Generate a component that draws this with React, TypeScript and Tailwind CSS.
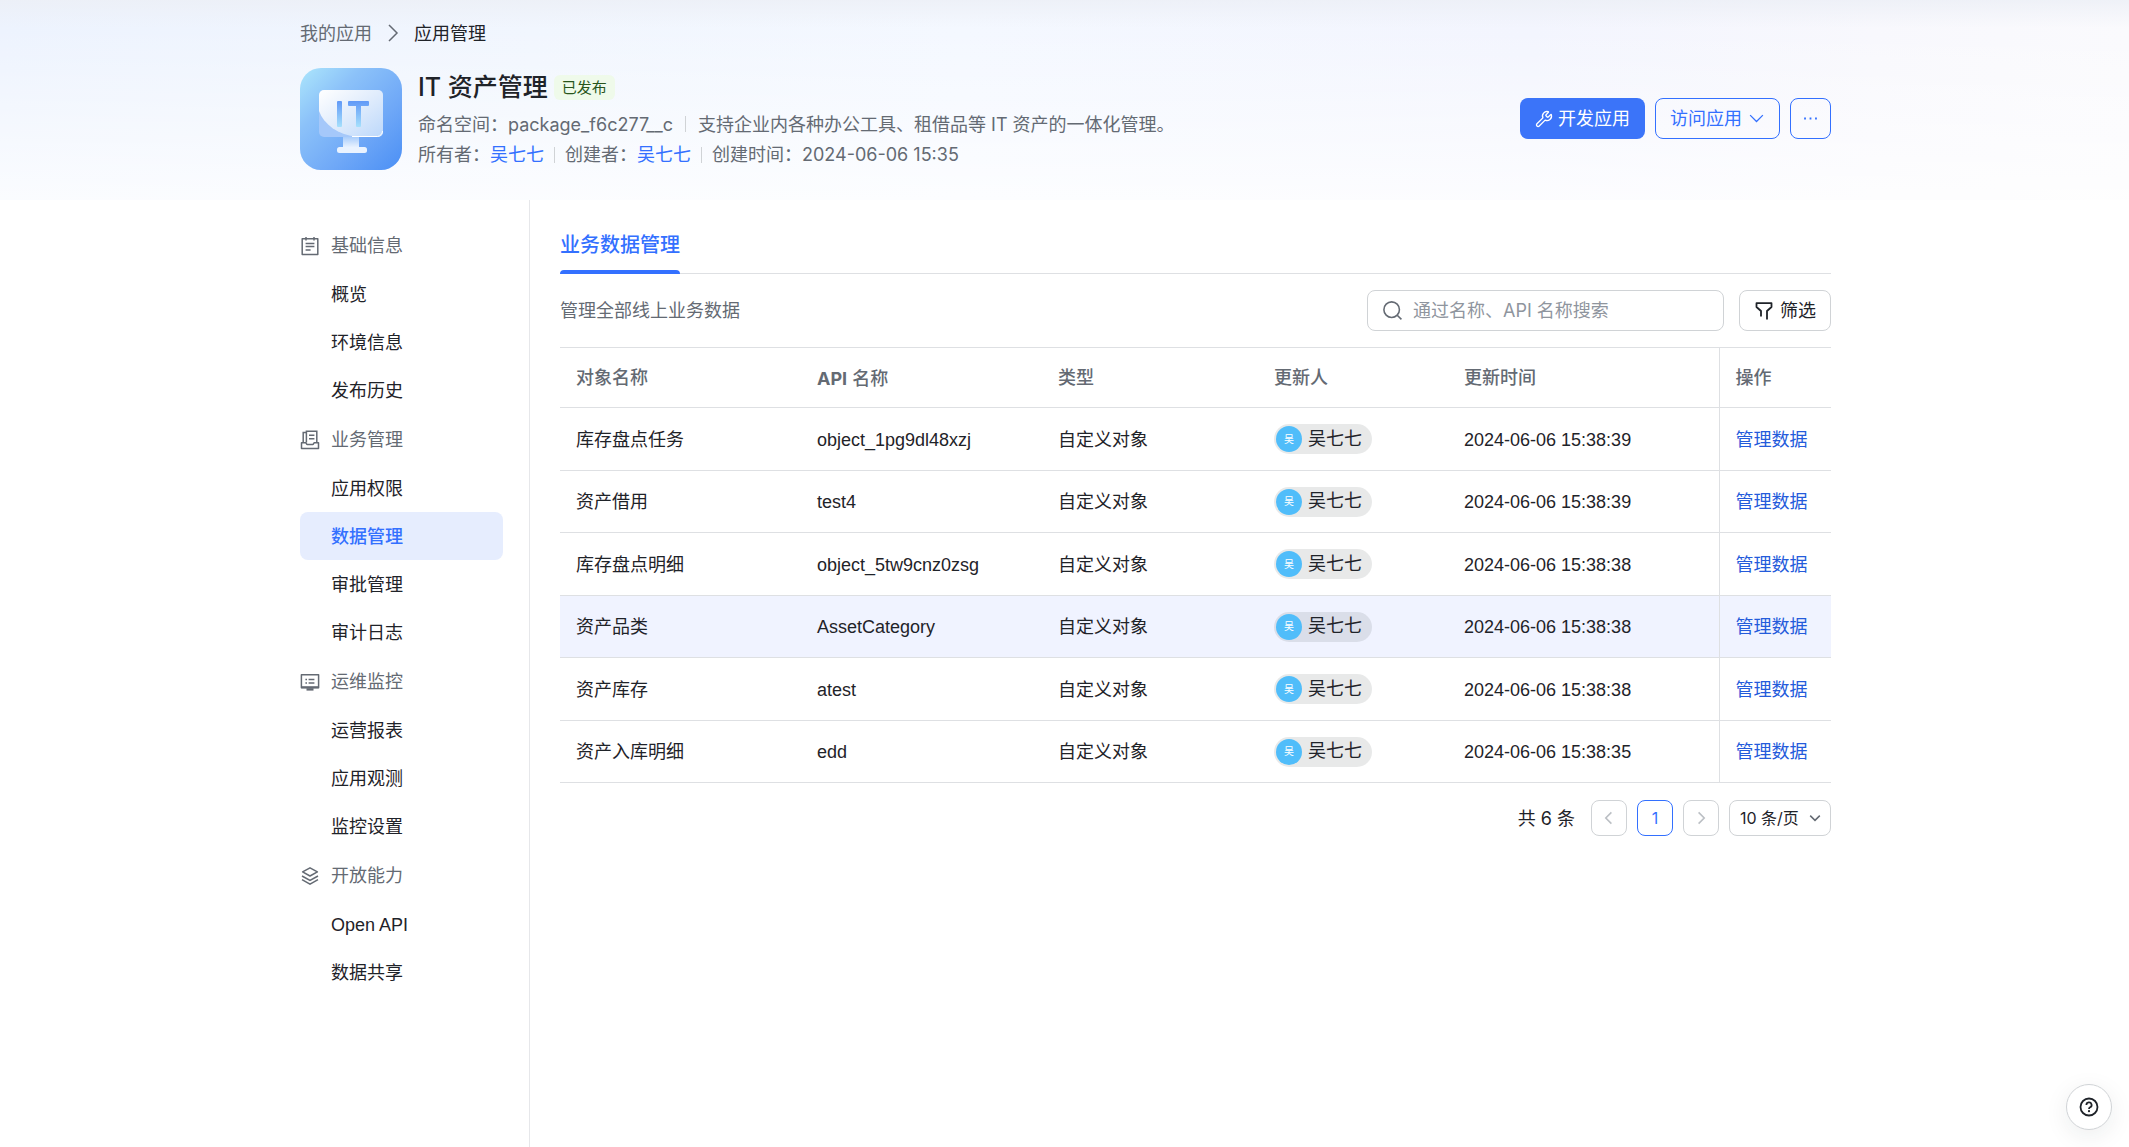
import { ReactNode } from 'react';
import { Wrench } from 'lucide-react';

type AssetObject = {
    name: string;
    api: string;
    time: string;
};

const objects: AssetObject[] = [
    { name: '库存盘点任务', api: 'object_1pg9dl48xzj', time: '2024-06-06 15:38:39' },
    { name: '资产借用', api: 'test4', time: '2024-06-06 15:38:39' },
    { name: '库存盘点明细', api: 'object_5tw9cnz0zsg', time: '2024-06-06 15:38:38' },
    { name: '资产品类', api: 'AssetCategory', time: '2024-06-06 15:38:38' },
    { name: '资产库存', api: 'atest', time: '2024-06-06 15:38:38' },
    { name: '资产入库明细', api: 'edd', time: '2024-06-06 15:38:35' },
];

const Icon = ({ size, children, className }: { size: number; children: ReactNode; className?: string }) => (
    <svg
        width={size}
        height={size}
        viewBox="0 0 20 20"
        fill="none"
        stroke="currentColor"
        strokeWidth="1.5"
        aria-hidden="true"
        className={`shrink-0 ${className ?? ''}`}
    >
        {children}
    </svg>
);

const menu = [
    {
        title: '基础信息',
        icon: (
            <>
                <path d="M2.2 2.8h15.6v15.6H2.2z" strokeLinejoin="round" />
                <path d="M6 1v3.4M14 1v3.4M5.6 7.4h8.8M5.6 10.6h8.8M5.6 13.9h5" />
            </>
        ),
        items: ['概览', '环境信息', '发布历史'],
    },
    {
        title: '业务管理',
        icon: (
            <>
                <path d="M1.5 12.8h4.2c.6 0 .8 1.7 1.6 1.7h5.4c.8 0 1-1.7 1.6-1.7h4.2v5.7h-17z" strokeLinejoin="round" />
                <path d="M3.2 12.5V2.5h3.2M6.4 12.5V1.2h10.4v11.3M9 5.2h5.4M9 8.8h5.4" />
            </>
        ),
        items: ['应用权限', '数据管理', '审批管理', '审计日志'],
    },
    {
        title: '运维监控',
        icon: (
            <>
                <path d="M1.4 2.8h17.2v13H1.4z" strokeLinejoin="round" />
                <path d="M1.4 15.2h17.2" strokeWidth="2" />
                <path d="M6.5 17.4h7" strokeWidth="2.4" />
                <path d="M5.4 7.4H7M8.6 7.4h5.8M5.4 11H7M8.6 11h5.8" />
            </>
        ),
        items: ['运营报表', '应用观测', '监控设置'],
    },
    {
        title: '开放能力',
        icon: (
            <>
                <path d="M10 1.8l7.4 4.1L10 10 2.6 5.9z" strokeLinejoin="round" />
                <path d="M2 10l8 4.3 8-4.3M2 13.7l8 4.4 8-4.4" />
            </>
        ),
        items: ['Open API', '数据共享'],
    },
];

const AppLogo = () => (
    <svg viewBox="0 0 102 102" role="img" aria-label="IT" className="size-[102px] shrink-0">
        <defs>
            <linearGradient id="logo-bg" x1="0" y1="0" x2="1" y2="1">
                <stop offset="0" stopColor="#ace6fc" />
                <stop offset="0.3" stopColor="#8cc2f9" />
                <stop offset="0.65" stopColor="#6fa8f7" />
                <stop offset="1" stopColor="#4b8ff5" />
            </linearGradient>
            <linearGradient id="logo-screen" x1="0" y1="0" x2="1" y2="1">
                <stop offset="0" stopColor="#ffffff" />
                <stop offset="0.5" stopColor="#e0ecfc" />
                <stop offset="1" stopColor="#bcd8fb" />
            </linearGradient>
            <linearGradient id="logo-mark" x1="0" y1="0" x2="0" y2="1">
                <stop offset="0" stopColor="#6199f7" />
                <stop offset="1" stopColor="#a6e0fc" />
            </linearGradient>
            <linearGradient id="logo-stand" x1="0" y1="0" x2="0" y2="1">
                <stop offset="0" stopColor="#a9cdfb" />
                <stop offset="1" stopColor="#eef5ff" />
            </linearGradient>
        </defs>
        <rect width="102" height="102" rx="21" fill="url(#logo-bg)" />
        <rect x="19" y="22" width="64" height="47" rx="5" fill="#a5c8fa" />
        <path d="M24 22h54a5 5 0 0 1 5 5v37a5 5 0 0 1-5 5H56C38 66 24 57 19 43V27a5 5 0 0 1 5-5z" fill="url(#logo-screen)" />
        <path d="M82.500 63a5.500 5.500 0 0 1-5 5.500H52" fill="none" stroke="#fff" />
        <rect x="37" y="33" width="5" height="26" rx="1" fill="url(#logo-mark)" />
        <path d="M49 33h19a1 1 0 0 1 1 1v3a1 1 0 0 1-1 1h-7v20a1 1 0 0 1-1 1h-3a1 1 0 0 1-1-1V38h-7a1 1 0 0 1-1-1v-3a1 1 0 0 1 1-1z" fill="url(#logo-mark)" />
        <rect x="43" y="69" width="16" height="11" fill="url(#logo-stand)" />
        <rect x="37" y="79" width="30" height="6" rx="2.500" fill="#eaf3ff" />
    </svg>
);

const Divider = () => <span className="h-4 w-px bg-[#d0d3d6]" />;

const Header = () => (
    <header className="bg-[linear-gradient(to_bottom,rgba(236,239,246,0.8)_0,rgba(255,255,255,0)_28px,rgba(255,255,255,0.75)_100%),linear-gradient(to_right,#edf3fe_0%,#f1f6fe_25%,#f4f8ff_45%,#f3f5fe_72%,#f8f8fd_88%,#fafafd_100%)]">
        <div className="mx-auto h-[200px] max-w-[1533px] pl-[2px]">
            <nav aria-label="breadcrumb" className="flex h-[66px] items-center gap-[11px] text-[#646a73]">
                <a href="#apps">我的应用</a>
                <Icon size={20}>
                    <path d="M6 2l8 8-8 8" />
                </Icon>
                <a href="#app" className="text-[#1f2329]">应用管理</a>
            </nav>
            <div className="flex items-start justify-between pt-[2px]">
                <div className="flex gap-4">
                    <AppLogo />
                    <div className="flex flex-col text-[#646a73]">
                        <div className="flex h-10 items-center gap-[6px]">
                            <h1 className="text-[25px] font-medium text-[#1f2329]">IT 资产管理</h1>
                            <span className="mb-[2px] rounded-md bg-[#effaea] px-2 text-[15px] leading-[25px] text-[#28551b]">已发布</span>
                        </div>
                        <div className="flex h-8 items-center gap-3">
                            <span>命名空间：package_f6c277__c</span>
                            <Divider />
                            <span>支持企业内各种办公工具、租借品等 IT 资产的一体化管理。</span>
                        </div>
                        <div className="flex h-[29px] items-center gap-[10px]">
                            <span>所有者：<a href="#owner" className="text-[#3370ff]">吴七七</a></span>
                            <Divider />
                            <span>创建者：<a href="#creator" className="text-[#3370ff]">吴七七</a></span>
                            <Divider />
                            <span>创建时间：2024-06-06 15:35</span>
                        </div>
                    </div>
                </div>
                <div className="flex gap-[10px] pt-[30px]">
                    <button className="flex h-[41px] items-center gap-[5px] rounded-lg bg-[#3b74f9] px-[15px] text-white">
                        <Wrench size={18} strokeWidth={1.8} aria-hidden="true" />
                        开发应用
                    </button>
                    <button className="flex h-[41px] items-center gap-[6px] rounded-lg border border-[#3370ff] px-[14px] text-[#3370ff]">
                        访问应用
                        <Icon size={17}>
                            <path d="M2.500 6l7.500 7.500L17.500 6" />
                        </Icon>
                    </button>
                    <button aria-label="更多" className="flex h-[41px] w-[41px] items-center justify-center rounded-lg border border-[#3370ff] text-[#3370ff]">
                        <Icon size={15}>
                            <path d="M1.500 10h2.400M8.800 10h2.400M16.100 10h2.400" strokeWidth="2.400" />
                        </Icon>
                    </button>
                </div>
            </div>
        </div>
    </header>
);

const Sidebar = () => (
    <nav aria-label="应用菜单" className="flex w-[230px] shrink-0 flex-col gap-[2px] border-r border-[#e6e7ea] pt-[22px] pr-[26px] font-['Liberation_Sans','Noto_Sans_CJK_SC',sans-serif]">
        {menu.map((group) => (
            <section key={group.title}>
                <h2 className="flex h-12 items-center gap-[11px] text-[#646a73]">
                    <Icon size={20}>{group.icon}</Icon>
                    {group.title}
                </h2>
                {group.items.map((item) => (
                    <a
                        key={item}
                        href="#menu"
                        className={`flex h-12 items-center rounded-lg pt-[2px] pl-[31px] ${
                            item === '数据管理' ? 'bg-[#e6edfe] font-medium text-[#3370ff]' : 'text-[#1f2329]'
                        }`}
                    >
                        {item}
                    </a>
                ))}
            </section>
        ))}
    </nav>
);

const ObjectTable = () => (
    <table className="w-full table-fixed border-collapse text-left font-['Liberation_Sans','Noto_Sans_CJK_SC',sans-serif] text-[#1f2329]">
        <colgroup>
            <col className="w-[241px]" />
            <col className="w-[241px]" />
            <col className="w-[216px]" />
            <col className="w-[190px]" />
            <col />
            <col className="w-[112px]" />
        </colgroup>
        <thead className="border-y border-[#dee0e3] text-[#646a73]">
            <tr className="h-[60px]">
                <th className="px-4 pt-[2px] font-medium">对象名称</th>
                <th className="px-4 pt-[2px] font-medium">
                    <span className="font-['Inter',sans-serif] font-bold">API</span> 名称
                </th>
                <th className="px-4 pt-[2px] font-medium">类型</th>
                <th className="px-4 pt-[2px] font-medium">更新人</th>
                <th className="px-4 pt-[2px] font-medium">更新时间</th>
                <th className="border-l border-[#dee0e3] px-4 pt-[2px] font-medium">操作</th>
            </tr>
        </thead>
        <tbody>
            {objects.map((row, index) => (
                <tr key={index} className={`h-[63px] border-b border-[#dee0e3] even:h-[62px] ${index === 3 ? 'bg-[#f0f3ff]' : ''}`}>
                    <td className="px-4 pt-[2px]">{row.name}</td>
                    <td className="px-4 pt-[2px]">{row.api}</td>
                    <td className="px-4 pt-[2px]">自定义对象</td>
                    <td className="px-4">
                        <span className="inline-flex h-[30px] items-center gap-[6px] rounded-full bg-[#1f2329]/10 pr-[10px] pl-[2px] align-middle">
                            <span className="flex size-[26px] items-center justify-center rounded-full bg-[#50bdfa] text-[10px] text-white">吴</span>
                            吴七七
                        </span>
                    </td>
                    <td className="px-4 pt-[2px]">{row.time}</td>
                    <td className="border-l border-[#dee0e3] px-4 pt-[2px]">
                        <a href="#data" className="text-[#245bdb]">管理数据</a>
                    </td>
                </tr>
            ))}
        </tbody>
    </table>
);

const Pagination = () => (
    <div className="mt-[17px] flex items-center justify-end gap-[10px] text-[#1f2329]">
        <span className="mr-[6px]">共 6 条</span>
        <button aria-label="上一页" className="flex size-9 items-center justify-center rounded-lg border border-[#d0d3d6] text-[#bbbfc4]">
            <Icon size={16}>
                <path d="M13 3l-7 7 7 7" strokeWidth="2" />
            </Icon>
        </button>
        <button className="size-9 rounded-lg border border-[#3370ff] text-base text-[#3370ff]">1</button>
        <button aria-label="下一页" className="flex size-9 items-center justify-center rounded-lg border border-[#d0d3d6] text-[#bbbfc4]">
            <Icon size={16}>
                <path d="M7 3l7 7-7 7" strokeWidth="2" />
            </Icon>
        </button>
        <div className="relative">
            <select aria-label="每页条数" className="h-9 w-[102px] appearance-none rounded-lg border border-[#d0d3d6] bg-white pl-[10px] text-base">
                <option>10 条/页</option>
            </select>
            <Icon size={12} className="pointer-events-none absolute top-3 right-[10px] text-[#646a73]">
                <path d="M2 6l8 8 8-8" strokeWidth="2.500" />
            </Icon>
        </div>
    </div>
);

const App = () => {
    return (
        <div className="flex min-h-screen flex-col bg-white font-['Inter','Noto_Sans_CJK_SC',sans-serif] text-[18px]">
            <Header />
            <div className="mx-auto flex w-full max-w-[1533px] grow pl-[2px]">
                <Sidebar />
                <main className="min-w-0 grow pl-[30px]">
                    <div role="tablist" className="flex h-[74px] border-b border-[#dee0e3]">
                        <button role="tab" aria-selected="true" className="relative -mb-px pt-4 text-[20px] font-medium text-[#3370ff]">
                            业务数据管理
                            <span className="absolute inset-x-0 bottom-0 h-1 rounded-t-full bg-[#3370ff]" />
                        </button>
                    </div>
                    <div className="flex h-[73px] items-center justify-between">
                        <p className="text-[#646a73]">管理全部线上业务数据</p>
                        <div className="flex gap-[15px]">
                            <label className="flex h-[41px] w-[357px] items-center gap-[10px] rounded-lg border border-[#d0d3d6] pl-[14px] text-[#646a73]">
                                <Icon size={21}>
                                    <circle cx="9.200" cy="9.200" r="7.400" />
                                    <path d="M14.500 14.500l4 4" />
                                </Icon>
                                <input
                                    type="search"
                                    aria-label="搜索"
                                    placeholder="通过名称、API 名称搜索"
                                    className="min-w-0 grow bg-transparent outline-none placeholder:text-[#8f959e]"
                                />
                            </label>
                            <button className="flex h-[41px] items-center gap-[6px] rounded-lg border border-[#d0d3d6] px-[14px] text-[#1f2329]">
                                <Icon size={20}>
                                    <path d="M13 18.500v-8.500l4.500-4V2.200h-15V6L7 10v5.500" strokeWidth="1.800" strokeLinejoin="round" />
                                </Icon>
                                筛选
                            </button>
                        </div>
                    </div>
                    <ObjectTable />
                    <Pagination />
                </main>
            </div>
            <button
                aria-label="帮助"
                className="fixed right-[17px] bottom-[17px] flex size-[46px] items-center justify-center rounded-full border border-[#d0d3d6] bg-white text-[#1f2329] shadow-[0_6px_24px_rgba(31,35,41,0.08)]"
            >
                <Icon size={20}>
                    <circle cx="10" cy="10" r="8.500" strokeWidth="1.800" />
                    <path d="M7.400 8a2.600 2.600 0 1 1 3.700 2.300c-.8.400-1.100.8-1.100 1.700" strokeWidth="1.800" />
                    <circle cx="10" cy="14.200" r="0.500" strokeWidth="1.200" />
                </Icon>
            </button>
        </div>
    );
};

export default App;
